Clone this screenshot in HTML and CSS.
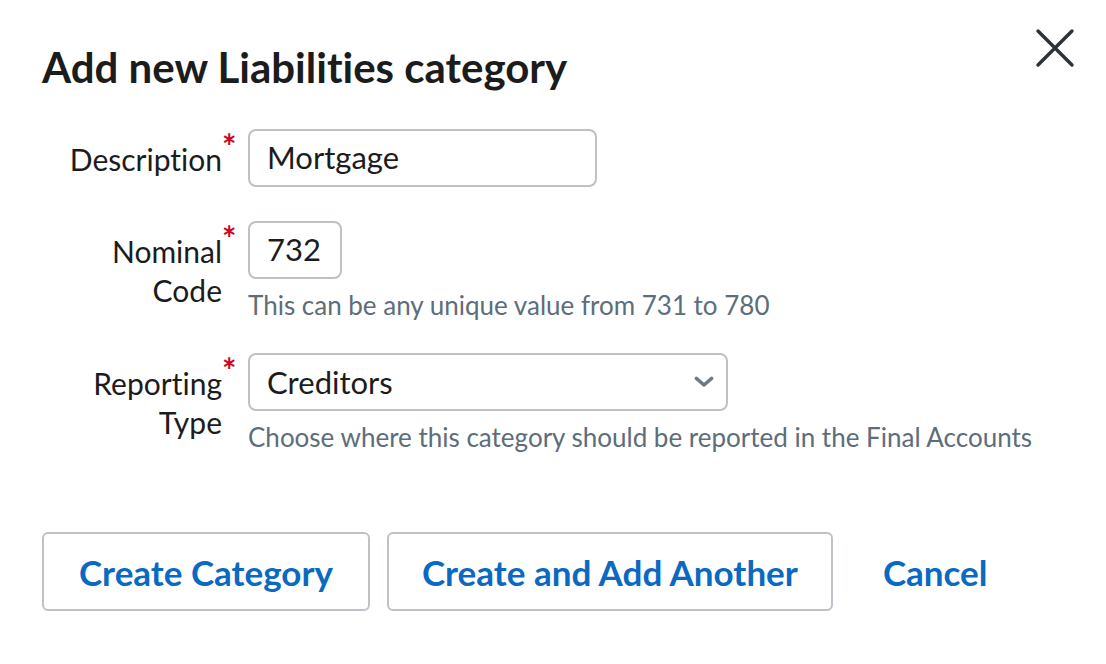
FILE: index.html
```html
<!DOCTYPE html>
<html>
<head>
<meta charset="utf-8">
<link rel="stylesheet" href="styles.css">
</head>
<body>
<div class="dialog">
  <button class="close" aria-label="Close">
    <svg width="40" height="40" viewBox="0 0 40 40"><path d="M3 3 L37 37 M37 3 L3 37" stroke="#2b3238" stroke-width="3.4" stroke-linecap="round" fill="none"/></svg>
  </button>
  <h1 class="title">Add new Liabilities category</h1>
  <div class="form">
    <div class="row">
      <label class="label">Description<span class="req">*</span></label>
      <div class="field">
        <div class="input wide">Mortgage</div>
      </div>
    </div>
    <div class="row">
      <label class="label">Nominal<span class="req">*</span><br>Code</label>
      <div class="field">
        <div class="input short">732</div>
        <div class="help">This can be any unique value from 731 to 780</div>
      </div>
    </div>
    <div class="row">
      <label class="label">Reporting<span class="req">*</span><br>Type</label>
      <div class="field">
        <div class="input select">Creditors
          <svg class="chev" width="20" height="12" viewBox="0 0 20 12"><path d="M2.5 2.5 L10 9 L17.5 2.5" stroke="#6b7a85" stroke-width="3.6" stroke-linecap="round" stroke-linejoin="round" fill="none"/></svg>
        </div>
        <div class="help">Choose where this category should be reported in the Final Accounts</div>
      </div>
    </div>
  </div>
  <div class="actions">
    <button class="btn">Create Category</button>
    <button class="btn btn-wide">Create and Add Another</button>
    <button class="link">Cancel</button>
  </div>
</div>
</body>
</html>
```
FILE: styles.css
```css
html, body {
  margin: 0;
  padding: 0;
  background: #ffffff;
}
body {
  font-family: Lato, "Liberation Sans", sans-serif;
  font-variant-ligatures: none;
  color: #1c1c1c;
}
.dialog {
  position: relative;
  padding: 38px 0 0 42px;
}
.close {
  position: absolute;
  top: 28px;
  left: 1035px;
  background: none;
  border: 0;
  padding: 0;
  width: 40px;
  height: 40px;
}
.title {
  margin: 0;
  font-size: 42px;
  font-weight: 700;
  line-height: 58px;
  color: #1c1c1c;
}
.form {
  display: flex;
  flex-direction: column;
  gap: 34px;
  margin-top: 33px;
}
.row {
  display: grid;
  grid-template-columns: 194px 1fr;
  column-gap: 12px;
  align-items: start;
}
.label {
  box-sizing: border-box;
  text-align: right;
  font-size: 30px;
  line-height: 39px;
  padding-top: 11px;
  padding-right: 14px;
  color: #1c1c1c;
  white-space: nowrap;
}
.req {
  display: inline-block;
  width: 0;
  overflow: visible;
  color: #d0021b;
  font-size: 34px;
  font-weight: 700;
  line-height: 20px;
  vertical-align: top;
  position: relative;
  top: -4px;
  left: 0;
}
.field {
  display: flex;
  flex-direction: column;
  align-items: flex-start;
}
.input {
  box-sizing: border-box;
  height: 58px;
  border: 2px solid #bcc2c8;
  border-radius: 8px;
  padding: 0 17px;
  font-size: 31px;
  line-height: 52px;
  color: #1c1c1c;
}
.wide { width: 349px; }
.short { width: 94px; }
.select {
  width: 480px;
  display: flex;
  justify-content: space-between;
  align-items: center;
  padding-right: 12px;
}
.help {
  margin-top: 13px;
  font-size: 26px;
  line-height: 27px;
  color: #5d6d7a;
}
.actions {
  display: flex;
  align-items: center;
  gap: 17px;
  margin-top: 81px;
}
.btn {
  box-sizing: border-box;
  height: 79px;
  background: #ffffff;
  border: 2px solid #bcc2c8;
  border-radius: 6px;
  padding: 0 35px;
  font-family: Lato, "Liberation Sans", sans-serif;
  font-variant-ligatures: none;
  font-size: 35px;
  font-weight: 700;
  color: #0a69c0;
}
.btn-wide {
  padding: 0 33px;
}
.link {
  background: none;
  border: 0;
  padding: 0 0 0 33px;
  font-family: Lato, "Liberation Sans", sans-serif;
  font-size: 35px;
  font-weight: 700;
  color: #0a69c0;
}
```
